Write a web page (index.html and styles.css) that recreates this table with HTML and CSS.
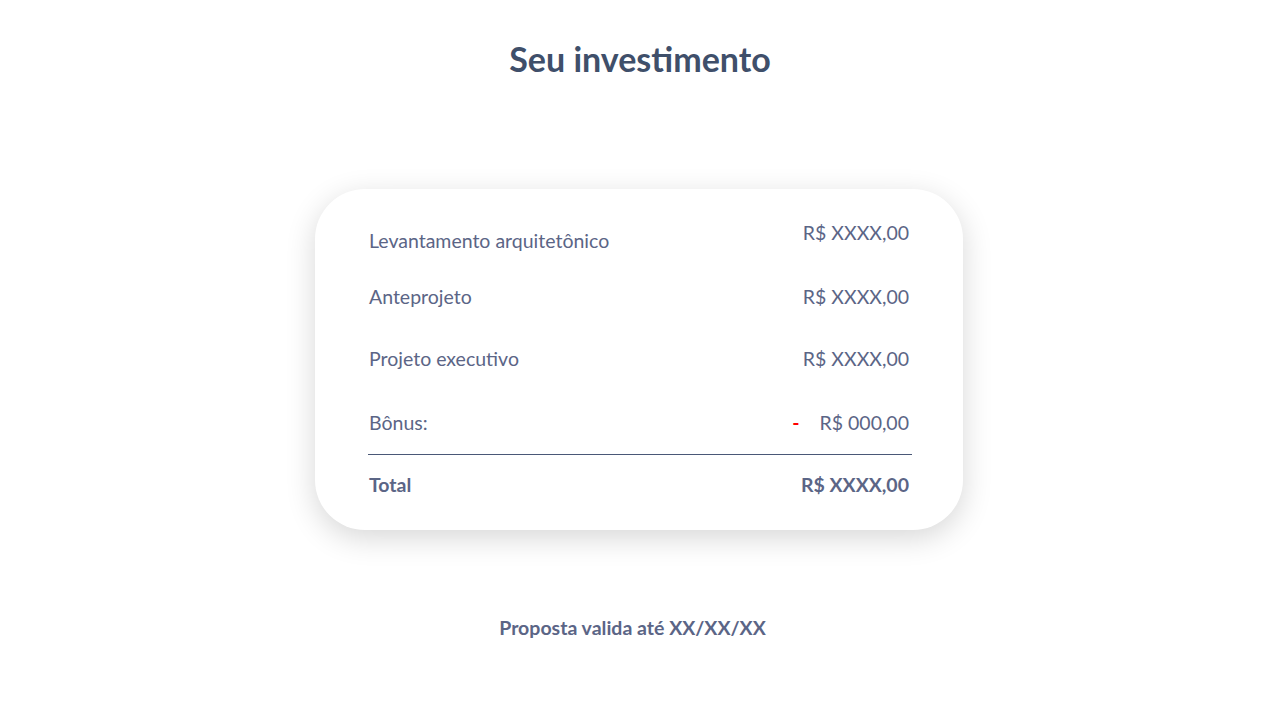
FILE: index.html
```html
<!DOCTYPE html>
<html>
<head>
    <title>Seu investimento</title>
    <link rel="stylesheet" href="styles.css">
</head>
<body>
    <h1 class="title">Seu investimento</h1>
    <div class="card">
        <div class="row row-first">
            <span class="label label-low">Levantamento arquitetônico</span>
            <span class="value">R$ XXXX,00</span>
        </div>
        <div class="row row-second">
            <span class="label">Anteprojeto</span>
            <span class="value">R$ XXXX,00</span>
        </div>
        <div class="row row-third">
            <span class="label">Projeto executivo</span>
            <span class="value">R$ XXXX,00</span>
        </div>
        <div class="row row-fourth">
            <span class="label">Bônus:</span>
            <span class="value"><span class="minus">-</span>R$ 000,00</span>
        </div>
        <hr class="divider">
        <div class="row row-total">
            <span class="label">Total</span>
            <span class="value">R$ XXXX,00</span>
        </div>
    </div>
    <p class="validity">Proposta valida até XX/XX/XX</p>
</body>
</html>
```

FILE: styles.css
```css
body {
    font-family: Lato, "Open Sans", sans-serif;
    background-color: #ffffff;
    color: #5b6586;
    margin: 0;
    padding: 0;
}
.title {
    margin: 0;
    padding-top: 38px;
    text-align: center;
    font-size: 34px;
    line-height: 42px;
    font-weight: 700;
    color: #3f4f6a;
}
.card {
    width: 540px;
    margin: 109px auto 0;
    padding: 32px 54px 33px;
    background-color: #fff;
    border-radius: 50px;
    box-shadow: 0 8px 30px rgba(0, 0, 0, 0.16);
    transform: translateX(-1px);
}
.row {
    display: flex;
    justify-content: space-between;
    align-items: flex-start;
    font-size: 19.5px;
    line-height: 24px;
}
.label-low {
    margin-top: 8px;
}
.row-second {
    margin-top: 32px;
}
.row-third {
    margin-top: 38px;
}
.row-fourth {
    margin-top: 40px;
}
.minus {
    color: #ff0000;
    font-weight: 700;
    margin-right: 20px;
}
.divider {
    border: none;
    border-top: 1px solid #4a5877;
    margin: 19px -3px 0 -1px;
}
.row-total {
    margin-top: 18px;
    font-weight: 700;
}
.validity {
    margin: 86px 0 0;
    padding-right: 15px;
    text-align: center;
    font-size: 19.5px;
    line-height: 24px;
    font-weight: 700;
}
```
